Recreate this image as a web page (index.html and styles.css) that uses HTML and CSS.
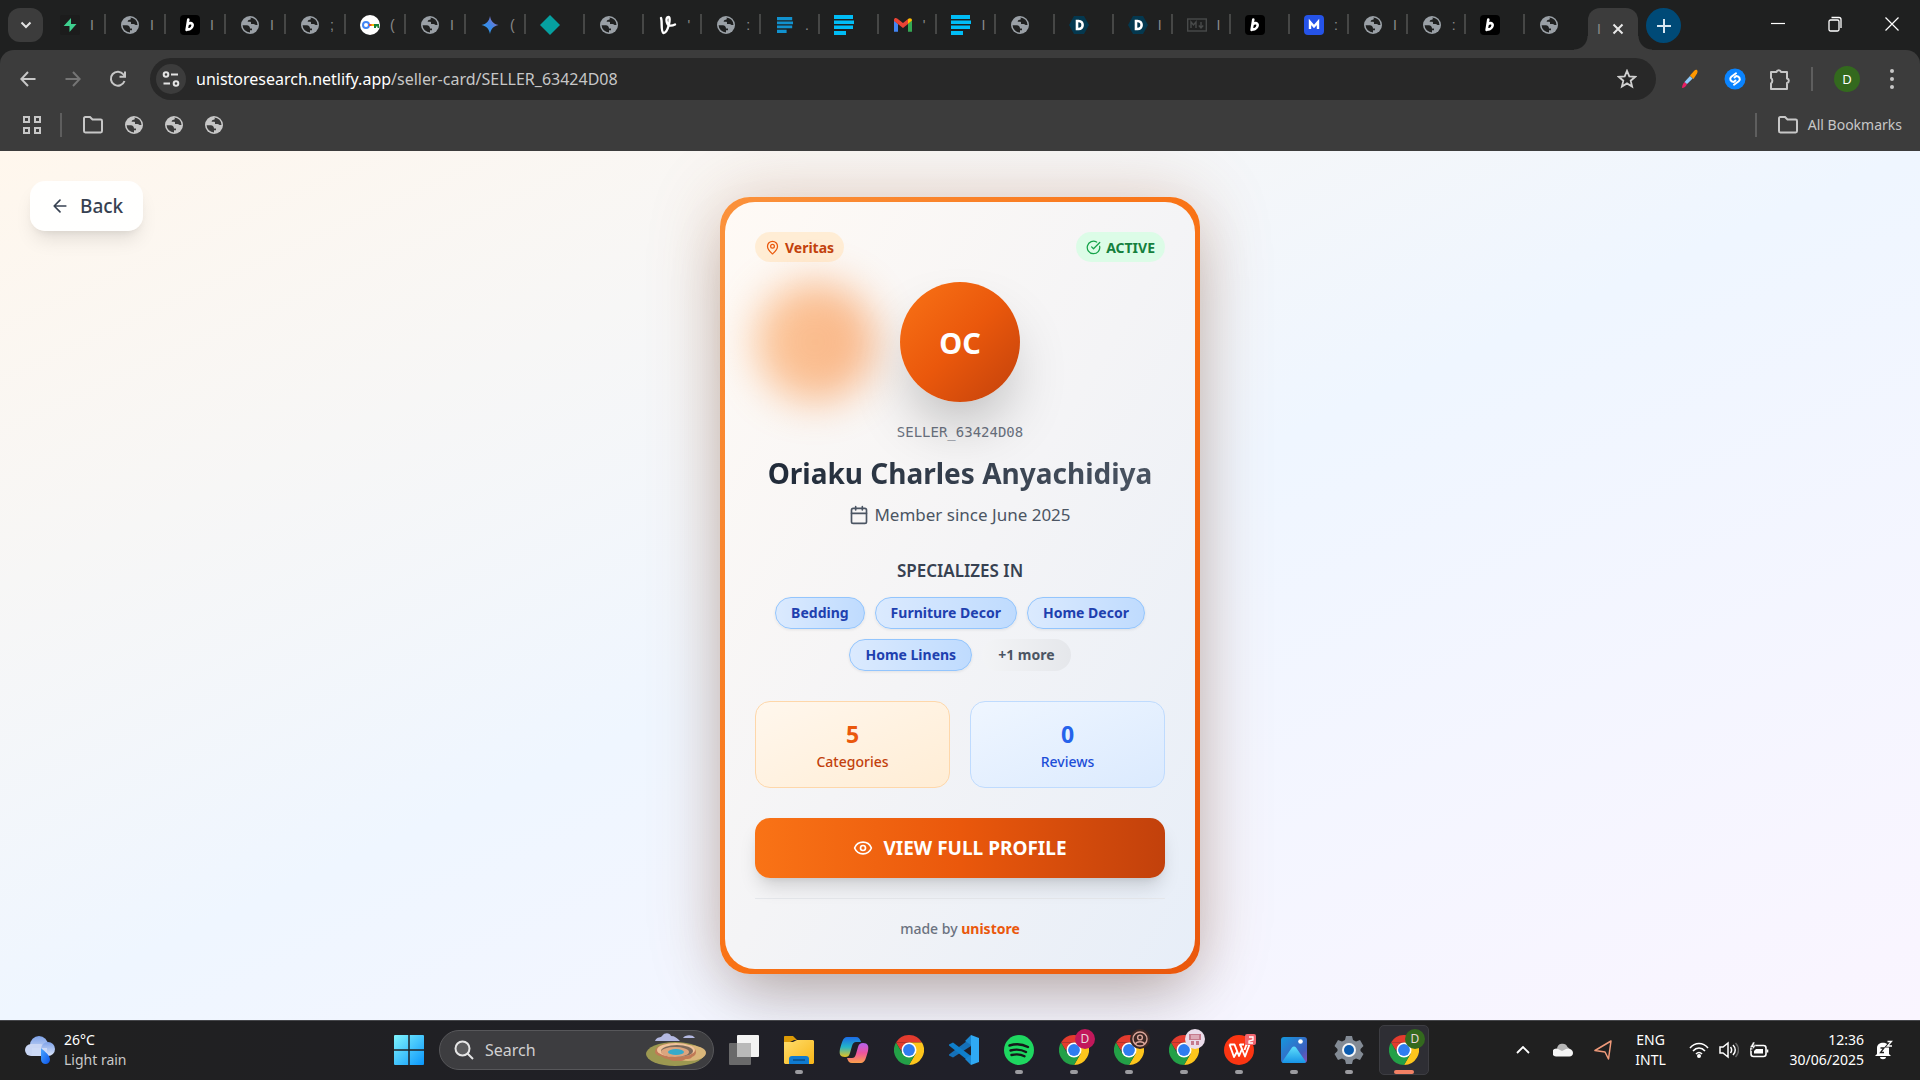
FILE: index.html
```html
<!DOCTYPE html>
<html lang="en">
<head>
<meta charset="utf-8">
<title>Unistore seller card</title>
<link rel="stylesheet" href="styles.css">
</head>
<body>
<svg class="defs" aria-hidden="true">
  <defs>
    <symbol id="globe" viewBox="0 0 20 20"><circle cx="10" cy="10" r="9" fill="currentColor"/><path d="M2.600 10.200h4.200c2 0 3.200 1.300 3.200 3.200h2v1.800h-2v2.300A7.500 7.500 0 0 1 2.600 10.200zM10.300 2.500c.9 1.200.6 2.100-.6 2.300-1.700.3-2 .8-2 1.900H10c.6 0 1 .4 1 1v1.300h2.500c1.200 0 1.700 1.100 2.700 1.100h1.300a7.500 7.500 0 0 0-7.200-7.600z" fill="var(--hole)"/></symbol>
    <symbol id="bee" viewBox="0 0 20 20"><rect width="20" height="20" rx="4"/><path d="M8.300 4.500 6.600 15M7.300 10.200c1.800-3.200 6-2.500 5.300.6-.7 3-3.700 4.400-5.500 2.900" fill="none" stroke="#fff" stroke-width="2.600" stroke-linecap="round"/></symbol>
    <symbol id="lines" viewBox="0 0 20 20"><path d="M0 0h19v4H0zM0 5.500h20v3.500H0zM0 10.500h19v3.500H0zM0 16h12v4H0z" fill="currentColor"/></symbol>
    <symbol id="dhex" viewBox="0 0 20 20"><path d="M5 1h10l5 9-5 9H5L0 10z" fill="#04384f"/><path d="M8 6v8h1.500c5.500 0 5.500-8 0-8z" fill="none" stroke="#fff" stroke-width="2.600"/></symbol>
    <symbol id="folder" viewBox="0 0 22 20"><path d="M2 3.500c0-.8.500-1.500 1.300-1.500H8l2.500 2.500h8.200c.8 0 1.300.6 1.300 1.400v10.200c0 .8-.5 1.400-1.300 1.400H3.300c-.8 0-1.300-.6-1.300-1.400z" fill="none" stroke="currentColor" stroke-width="2"/></symbol>
    <symbol id="chrome" viewBox="0 0 32 32"><path d="M2.140 8A16 16 0 0 1 29.860 8H16z" fill="#e33b2e"/><path d="M2.140 8H16L7 16z" fill="#e33b2e"/><path d="M29.860 8H16l7 12-7 12A16 16 0 0 0 29.860 8z" fill="#fdc51c"/><path d="M2.140 8A16 16 0 0 0 16 32l6.900-12H9.100z" fill="#23a047"/><circle cx="16" cy="16" r="8" fill="#fff"/><circle cx="16" cy="16" r="6.300" fill="#2f7df0"/></symbol>
    <linearGradient id="gWin" x1="0" y1="0" x2="1" y2="1"><stop offset="0" stop-color="#7ff4fd"/><stop offset="1" stop-color="#0a96fb"/></linearGradient>
    <linearGradient id="gStar" x1="0" y1="1" x2="1" y2="0"><stop offset="0" stop-color="#23a5e0"/><stop offset=".5" stop-color="#3f86e8"/><stop offset="1" stop-color="#b06ab0"/></linearGradient>
    <linearGradient id="gCloud" x1="0" y1="0" x2="0" y2="1"><stop offset="0" stop-color="#7ea2e8"/><stop offset="1" stop-color="#dbe5fa"/></linearGradient>
    <linearGradient id="gDrop" x1="0" y1="0" x2="1" y2="1"><stop offset="0" stop-color="#4aa6ff"/><stop offset="1" stop-color="#0b55ea"/></linearGradient>
    <linearGradient id="gCopA" x1="0" y1="0" x2="0" y2="1"><stop offset="0" stop-color="#1c6be8"/><stop offset=".5" stop-color="#23b5c8"/><stop offset="1" stop-color="#e8c21e"/></linearGradient>
    <linearGradient id="gCopB" x1="0" y1="0" x2="0" y2="1"><stop offset="0" stop-color="#b263f0"/><stop offset=".5" stop-color="#f0549c"/><stop offset="1" stop-color="#fba04a"/></linearGradient>
    <linearGradient id="gFold" x1="0" y1="0" x2="1" y2="1"><stop offset="0" stop-color="#ffdd6b"/><stop offset="1" stop-color="#f8b517"/></linearGradient>
    <linearGradient id="gPhoto" x1="0" y1="0" x2="1" y2="1"><stop offset="0" stop-color="#1498dd"/><stop offset=".7" stop-color="#3f5fc0"/><stop offset="1" stop-color="#8a4fb5"/></linearGradient>
    <linearGradient id="gHill" x1="0" y1="0" x2="0" y2="1"><stop offset="0" stop-color="#5fe0fb"/><stop offset="1" stop-color="#1793e6"/></linearGradient>
  </defs>
</svg>

<header class="browser">
  <div class="tabbar">
    <button class="tab-search" aria-label="Search tabs"><svg width="12" height="8" viewBox="0 0 12 8"><path d="M1.500 1.500 6 6l4.500-4.500" fill="none" stroke="#e3e3e3" stroke-width="2"/></svg></button>
    <nav class="tabs">
      <a class="tab" href="#"><svg class="fav" viewBox="0 0 20 20"><rect width="20" height="20" rx="2" fill="#1c1c1c"/><path d="M11 3v6h5.500L9.500 17v-6H3.700z" fill="#3ecf8e"/></svg><span>I</span></a>
      <a class="tab" href="#"><svg class="fav"><use href="#globe"/></svg><span>I</span></a>
      <a class="tab" href="#"><svg class="fav"><use href="#bee"/></svg><span>I</span></a>
      <a class="tab" href="#"><svg class="fav"><use href="#globe"/></svg><span>I</span></a>
      <a class="tab" href="#"><svg class="fav"><use href="#globe"/></svg><span>;</span></a>
      <a class="tab" href="#"><svg class="fav" viewBox="0 0 20 20"><circle cx="10" cy="10" r="10" fill="#fff"/><circle cx="6" cy="10" r="3" fill="none" stroke="#4285f4" stroke-width="2"/><path d="M9 9h3v2H9z" fill="#ea4335"/><path d="M11.500 9H14v2h-2.500z" fill="#fbbc05"/><path d="M14 9h5v4h-1.500v-1.500H16V13h-2z" fill="#188038"/></svg><span>(</span></a>
      <a class="tab" href="#"><svg class="fav"><use href="#globe"/></svg><span>I</span></a>
      <a class="tab" href="#"><svg class="fav" viewBox="0 0 20 20"><path d="M10 1c.8 5 3.500 8 8.500 9-5 1-7.700 4-8.500 9-.8-5-3.500-8-8.500-9 5-1 7.700-4 8.500-9z" fill="url(#gStar)"/></svg><span>(</span></a>
      <a class="tab" href="#"><svg class="fav" viewBox="0 0 20 20"><path d="M10 0 20 10 10 20 0 10z" fill="#06a0a0"/></svg></a>
      <a class="tab" href="#"><svg class="fav"><use href="#globe"/></svg></a>
      <a class="tab" href="#"><svg class="fav" viewBox="0 0 20 20"><path d="M3 3c1.500 3-.5 14 2.500 15 4.500 0 8-16 5-16-3.500 0-2 8 1 8.500 2 .5 3.500 0 5.500-1" fill="none" stroke="#fff" stroke-width="2.400" stroke-linecap="round"/></svg><span>'</span></a>
      <a class="tab" href="#"><svg class="fav"><use href="#globe"/></svg><span>:</span></a>
      <a class="tab" href="#"><svg class="fav fav-small"><use href="#lines"/></svg><span>.</span></a>
      <a class="tab" href="#"><svg class="fav cyan"><use href="#lines"/></svg></a>
      <a class="tab" href="#"><svg class="fav" viewBox="0 0 20 20"><path d="M1 5.500v11.200h4V9z" fill="#4285f4"/><path d="M19 5.500v11.200h-4V9z" fill="#34a853"/><path d="M1 5.500V4.800C1 3 3 2.500 4.200 3.500L10 8l5-4v5l-5 4-9-7z" fill="#ea4335"/><path d="M15 9V4c2-1.500 4-.5 4 1.500z" fill="#fbbc04"/></svg><span>'</span></a>
      <a class="tab" href="#"><svg class="fav cyan"><use href="#lines"/></svg><span>I</span></a>
      <a class="tab" href="#"><svg class="fav"><use href="#globe"/></svg></a>
      <a class="tab" href="#"><svg class="fav"><use href="#dhex"/></svg></a>
      <a class="tab" href="#"><svg class="fav"><use href="#dhex"/></svg><span>I</span></a>
      <a class="tab" href="#"><svg class="fav" viewBox="0 0 20 20" fill="none" stroke="#484a4a" stroke-width="1.400"><rect x=".7" y="4" width="18.600" height="12"/><path d="M4 13V7l2.500 3L9 7v6M14 7v5M11.800 10.500 14 13l2.200-2.500"/></svg><span>I</span></a>
      <a class="tab" href="#"><svg class="fav"><use href="#bee"/></svg></a>
      <a class="tab" href="#"><svg class="fav" viewBox="0 0 20 20"><rect width="20" height="20" rx="4" fill="#2553e8"/><path d="M6 14V7l4 4.500L14 7v7" fill="none" stroke="#fff" stroke-width="2.400"/></svg><span>:</span></a>
      <a class="tab" href="#"><svg class="fav"><use href="#globe"/></svg><span>I</span></a>
      <a class="tab" href="#"><svg class="fav"><use href="#globe"/></svg><span>:</span></a>
      <a class="tab" href="#"><svg class="fav"><use href="#bee"/></svg></a>
      <a class="tab last" href="#"><svg class="fav"><use href="#globe"/></svg></a>
    </nav>
    <div class="tab-active"><span>I</span><button aria-label="Close tab"><svg width="12" height="12" viewBox="0 0 12 12"><path d="m1.500 1.500 9 9m0-9-9 9" stroke="#e8e8e8" stroke-width="2"/></svg></button></div>
    <button class="tab-new" aria-label="New tab"><svg width="14" height="14" viewBox="0 0 14 14"><path d="M7 0v14M0 7h14" stroke="#d8e6f0" stroke-width="2"/></svg></button>
    <div class="win-controls">
      <button aria-label="Minimize"><svg width="14" height="14" viewBox="0 0 14 14"><path d="M0 6.500h14" stroke="#fff" stroke-width="1.200"/></svg></button>
      <button aria-label="Restore"><svg width="14" height="16" viewBox="0 0 14 16" fill="none" stroke="#fff" stroke-width="1.300"><rect x="1" y="4" width="10" height="11" rx="1.500"/><path d="M3.500 1.500H11c1.300 0 2 .7 2 2V12"/></svg></button>
      <button aria-label="Close"><svg width="14" height="14" viewBox="0 0 14 14"><path d="m.5.500 13 13m0-13-13 13" stroke="#fff" stroke-width="1.200"/></svg></button>
    </div>
  </div>

  <div class="toolbar">
    <div class="nav-buttons">
      <button aria-label="Back"><svg width="16" height="16" viewBox="0 0 16 16" fill="none" stroke="#c7c7c7" stroke-width="2"><path d="M15.500 8H1.500M8 1 1.300 8 8 15"/></svg></button>
      <button aria-label="Forward" disabled><svg width="16" height="16" viewBox="0 0 16 16" fill="none" stroke="#757575" stroke-width="2"><path d="M.5 8h14M8 1l6.700 7L8 15"/></svg></button>
      <button aria-label="Reload"><svg width="18" height="18" viewBox="0 0 18 18" fill="none" stroke="#c7c7c7" stroke-width="2"><path d="M15.500 11A7 7 0 1 1 14.500 4.500L16 6.500M16 1.500v5.200h-5.500"/></svg></button>
    </div>
    <form class="address">
      <button type="button" class="site-info" aria-label="Site information"><svg width="18" height="16" viewBox="0 0 18 16" fill="none" stroke="#e3e3e3" stroke-width="2"><circle cx="4" cy="3.500" r="2.300"/><path d="M9 3.500h7M1.500 12.500H8"/><circle cx="14" cy="12.500" r="2.300"/></svg></button>
      <div class="url" role="textbox" aria-label="Address">unistoresearch.netlify.app<span>/seller-card/SELLER_63424D08</span></div>
      <button type="button" class="bookmark" aria-label="Bookmark this tab"><svg width="20" height="20" viewBox="0 0 20 20"><path d="m10 1.800 2.300 5.500 6 .5-4.600 3.900 1.400 5.800-5.100-3.100-5.100 3.100 1.400-5.800L1.700 7.800l6-.5z" fill="none" stroke="#d0d0d0" stroke-width="1.800"/></svg></button>
    </form>
    <div class="extensions">
      <button aria-label="Color picker"><svg width="20" height="20" viewBox="0 0 20 20"><path d="M2 19c0-2.500 1-4.500 2.500-6l2.500 2C6 17.500 4 19 2 19z" fill="#e91e63"/><path d="m4.500 13 5.500-6 2.700 2.500L7 15z" fill="#90caf9"/><path d="m10 6.500 4-4.500c2.500-2.500 4.500-.5 3 2.500l-3.500 5.500z" fill="#ff9800"/></svg></button>
      <button aria-label="Shazam"><svg width="22" height="22" viewBox="0 0 22 22"><circle cx="11" cy="11" r="10.500" fill="#0a84ff"/><path d="M11.500 12.500 9.800 14C6.500 13.500 5 11 7.300 8.800L12 5.300M10.500 9.500 12.200 8c3.300.5 4.800 3 2.500 5.200L10 16.700" fill="none" stroke="#fff" stroke-width="2" stroke-linecap="round"/></svg></button>
      <button aria-label="Extensions"><svg width="22" height="24" viewBox="0 0 22 24"><path d="M2 5h5.500a2.300 2.300 0 0 1 4.500 0h6v6.500a2.300 2.300 0 0 1 0 4.500v6H2v-5.500a3.500 3.500 0 0 0 0-5.500z" fill="none" stroke="#c7c7c7" stroke-width="2" stroke-linejoin="round"/></svg></button>
      <i class="rule"></i>
      <button class="profile" aria-label="Profile">D</button>
      <button aria-label="Menu"><svg width="6" height="22" viewBox="0 0 6 22" fill="#c7c7c7"><circle cx="3" cy="3" r="2"/><circle cx="3" cy="11" r="2"/><circle cx="3" cy="19" r="2"/></svg></button>
    </div>
  </div>

  <div class="bookmarks">
    <a href="#" aria-label="Apps"><svg width="20" height="20" viewBox="0 0 20 20" fill="none" stroke="#c7c7c7" stroke-width="2"><path d="M2 2h5v5H2zM13 2h5v5h-5zM2 13h5v5H2zM13 13h5v5h-5z"/></svg></a>
    <i class="rule"></i>
    <a href="#" aria-label="Folder"><svg width="22" height="20"><use href="#folder"/></svg></a>
    <a href="#" aria-label="Site"><svg width="20" height="20"><use href="#globe"/></svg></a>
    <a href="#" aria-label="Site"><svg width="20" height="20"><use href="#globe"/></svg></a>
    <a href="#" aria-label="Site"><svg width="20" height="20"><use href="#globe"/></svg></a>
    <i class="rule push"></i>
    <a href="#" class="all"><svg width="22" height="20"><use href="#folder"/></svg>All Bookmarks</a>
  </div>
</header>

<main class="page">
  <button class="back"><svg width="20" height="20" viewBox="0 0 24 24" fill="none" stroke="currentColor" stroke-width="2" stroke-linecap="round" stroke-linejoin="round"><path d="m12 19-7-7 7-7M19 12H5"/></svg>Back</button>

  <article class="card">
    <div class="card-body">
      <div class="badges">
        <span class="badge campus"><svg width="15" height="15" viewBox="0 0 24 24"><path d="M20 10c0 5-5.500 10.200-7.400 11.800a1 1 0 0 1-1.200 0C9.500 20.200 4 15 4 10a8 8 0 0 1 16 0"/><circle cx="12" cy="10" r="3"/></svg>Veritas</span>
        <span class="badge active"><svg width="15" height="15" viewBox="0 0 24 24"><path d="M21.800 10A10 10 0 1 1 17 3.330"/><path d="m9 11 3 3L22 4"/></svg>ACTIVE</span>
      </div>
      <div class="avatar-wrap"><i class="glow"></i><div class="avatar">OC</div></div>
      <p class="seller-id">SELLER_63424D08</p>
      <h1>Oriaku Charles Anyachidiya</h1>
      <p class="member"><svg width="20" height="20" viewBox="0 0 24 24"><path d="M8 2v4M16 2v4M3 10h18"/><rect x="3" y="4" width="18" height="18" rx="2"/></svg>Member since June 2025</p>
      <h2>SPECIALIZES IN</h2>
      <ul class="chips">
        <li>Bedding</li><li>Furniture Decor</li><li>Home Decor</li><li>Home Linens</li><li class="more">+1 more</li>
      </ul>
      <div class="stats">
        <div class="stat orange"><strong>5</strong>Categories</div>
        <div class="stat blue"><strong>0</strong>Reviews</div>
      </div>
      <button class="view"><svg width="20" height="20" viewBox="0 0 24 24"><path d="M2.060 12.350a1 1 0 0 1 0-.7 10.750 10.750 0 0 1 19.880 0 1 1 0 0 1 0 .7 10.750 10.750 0 0 1-19.880 0"/><circle cx="12" cy="12" r="3"/></svg>VIEW FULL PROFILE</button>
      <footer>made by <a href="#">unistore</a></footer>
    </div>
  </article>
</main>

<footer class="taskbar">
  <button class="weather">
    <svg width="30" height="28" viewBox="0 0 30 28"><circle cx="14" cy="9" r="9" fill="url(#gCloud)"/><rect y="8" width="21" height="12" rx="6" fill="#c9d6f4"/><circle cx="23" cy="13" r="7" fill="url(#gCloud)"/><path d="M7 12h15v8H7z" fill="#cddaf6"/><path d="M16 12c4 4 9 7 9 11.500a4.500 4.500 0 0 1-9 0z" fill="url(#gDrop)"/></svg>
    <span><b>26°C</b>Light rain</span>
  </button>
  <nav class="apps">
    <button class="app" aria-label="Start"><svg width="30" height="30" viewBox="0 0 30 30" fill="url(#gWin)"><path d="M1 0h28a1 1 0 0 1 1 1v28a1 1 0 0 1-1 1H1a1 1 0 0 1-1-1V1a1 1 0 0 1 1-1z"/><path d="M15 0v30M0 15h30" stroke="#202024" stroke-width="1.500"/></svg></button>
    <label class="search">
      <svg width="20" height="20" viewBox="0 0 20 20" fill="#5c5c5e" stroke="#e6e6e6" stroke-width="2"><circle cx="8.500" cy="8.500" r="7"/><path d="m13.500 13.500 5.500 5.500"/></svg>
      <input type="text" placeholder="Search">
      <svg width="62" height="34" viewBox="0 0 62 34"><path d="M10 8c2-5 6-3 7-5 3-4 8-3 9 0 4 0 6 2 9 5zM38 5c2-3 9-4 12 0z" fill="#b4b9e2"/><ellipse cx="30" cy="21" rx="29" ry="12" fill="#9c9851"/><ellipse cx="43" cy="20" rx="18" ry="8" fill="#d9b67a"/><path d="M10 19c0-6 9-9 20-9s21 3 21 9c0 3-2 4-4 5-2 3-6 1-8 3-3 2-6 0-9 1-3 0-5-1-7-2-3 0-5-2-7-3-3 0-6-2-6-4z" fill="#c07a56"/><ellipse cx="31" cy="17" rx="19" ry="7" fill="#f0c49b"/><ellipse cx="32" cy="18" rx="16" ry="6" fill="#7d6a5c"/><ellipse cx="30" cy="19" rx="14" ry="5" fill="#dca57e"/><ellipse cx="31" cy="19" rx="8" ry="3" fill="#35aacb"/></svg>
    </label>
    <button class="app" aria-label="Task view"><svg width="30" height="30" viewBox="0 0 30 30"><rect x="8" width="22" height="22" rx="1" fill="#f3f3f3"/><rect y="8" width="22" height="22" rx="1" fill="#777" opacity=".85"/><path d="M8 8h14v14H8z" fill="#b9b9b9"/></svg></button>
    <button class="app open" aria-label="File Explorer"><svg width="30" height="30" viewBox="0 0 30 30"><path d="M0 2c0-1 .5-1 1-1h8l4 4h-3L0 10z" fill="#dc9a06"/><path d="M0 7h9l4-2h16l1 1v22l-1 1H1l-1-1z" fill="url(#gFold)"/><path d="M5 29v-5c0-2 1-3 3-3h14c2 0 3 1 3 3v5z" fill="#0f7bd1"/><path d="M9 25h12" stroke="#0a4c86" stroke-width="1.500"/></svg></button>
    <button class="app" aria-label="Copilot"><svg width="30" height="30" viewBox="0 0 30 30"><path d="M8 2h9c3 0 4 2 5 5h-5c-2 0-3 1-4 4l-2 7c-1 3-2 4-5 4-5 0-6-3-5-8C3 7 4 2 8 2z" fill="url(#gCopA)"/><path d="M22 28h-9c-3 0-4-2-5-5h5c2 0 3-1 4-4l2-7c1-3 2-4 5-4 5 0 6 3 5 8-2 7-3 12-7 12z" fill="url(#gCopB)"/></svg></button>
    <button class="app" aria-label="Chrome"><svg width="30" height="30"><use href="#chrome"/></svg></button>
    <button class="app" aria-label="Visual Studio Code"><svg width="30" height="30" viewBox="0 0 30 30"><path d="M22 3v8L4 22.500 0 20.500v-1z" fill="#1570b8"/><path d="M0 9.500 4 7.500 22 21v7L0 10.500z" fill="#0f7fcb"/><path d="m22 0 8 3v24l-8 3z" fill="#2fa9f3"/><path d="m22 0-6 6 6 4zM22 30l-6-6 6-4z" fill="#1b86d0"/></svg></button>
    <button class="app open" aria-label="Spotify"><svg width="30" height="30" viewBox="0 0 30 30"><circle cx="15" cy="15" r="15" fill="#1ed760"/><path d="M5.500 10.500c6-2 13-1.500 18.500 1.500M6.500 15.500c5.500-1.500 11-1 15.500 1.500M7.500 20c4.500-1 9-1 13 1.200" fill="none" stroke="#15181a" stroke-width="2.400" stroke-linecap="round"/></svg></button>
    <button class="app open" aria-label="Chrome, profile D"><svg width="30" height="30"><use href="#chrome"/></svg><span class="who pink">D</span></button>
    <button class="app open" aria-label="Chrome, personal"><svg width="30" height="30"><use href="#chrome"/></svg><span class="who brown"><svg width="16" height="16" viewBox="0 0 16 16" fill="none" stroke="#dba59a" stroke-width="1.400"><circle cx="8" cy="8" r="7"/><circle cx="8" cy="6.500" r="2.400"/><path d="M3.500 13c1-3 8-3 9 0"/></svg></span></button>
    <button class="app open" aria-label="Chrome, store"><svg width="30" height="30"><use href="#chrome"/></svg><span class="who white"><svg width="14" height="14" viewBox="0 0 14 14" fill="#c57b8d"><path d="M1 2h12v6H1zM3 9h3v4H3zM8 9h3v4H8z"/><path d="M3 4h8M3 6h8" stroke="#f3d9e0"/></svg></span></button>
    <button class="app open" aria-label="WPS Office"><svg width="30" height="30" viewBox="0 0 30 30"><circle cx="15" cy="15" r="15" fill="#fb3512"/><path d="M5.500 9.500h5L15 21l3-7-2-4.500h4M5.500 9.500 10 22l3.500-6M18 14l3 7.500 4.500-12h-3L20.500 15" fill="none" stroke="#fff" stroke-width="1.900" stroke-linejoin="round"/></svg><span class="who link"><svg width="10" height="10" viewBox="0 0 10 10"><path d="M3 2h4v3L3 6v2h4" fill="none" stroke="#fff" stroke-width="1.300"/></svg></span></button>
    <button class="app open" aria-label="Photos"><svg width="26" height="26" viewBox="0 0 26 26"><rect width="26" height="26" rx="3" fill="url(#gPhoto)"/><path d="M1 25 11 10.500c1-1.500 3-1.500 4 0L25 25c-1 1-2 1-3 1H3c-1 0-1.500 0-2-1z" fill="url(#gHill)"/><circle cx="19.500" cy="4.500" r="2.300" fill="#fff"/></svg></button>
    <button class="app open" aria-label="Settings"><svg width="30" height="30" viewBox="0 0 30 30"><path d="M12 1h6l1 4 3 1.500L26 5l3.500 6-3 3v2l3 3L26 25l-4-1.500L19 25l-1 4h-6l-1-4-3-1.500L4 25 .5 19l3-3v-2l-3-3L4 5l4 1.500L11 5z" fill="#838b95"/><circle cx="15" cy="15" r="7" fill="#f3f5f7"/><circle cx="15" cy="15" r="5" fill="#0b5cb0"/></svg></button>
    <button class="app open current" aria-label="Chrome, current window"><svg width="30" height="30"><use href="#chrome"/></svg><span class="who green">D</span></button>
  </nav>
  <div class="tray">
    <button aria-label="Hidden icons"><svg width="14" height="8" viewBox="0 0 14 8"><path d="m1 7 6-6 6 6" fill="none" stroke="#fff" stroke-width="1.800"/></svg></button>
    <button aria-label="OneDrive"><svg width="20" height="14" viewBox="0 0 20 14"><path d="M4 6a5.500 5.500 0 0 1 10.500-2L18 7 10 11z" fill="#b5b5b5"/><path d="M4 13.500A4 4 0 1 1 5 6l4 2 4-2c5-1 7 2 7 4s-1.500 3.500-3.500 3.500z" fill="#f5f5f5"/></svg></button>
    <button aria-label="Location in use"><svg width="18" height="20" viewBox="0 0 18 20"><path d="M17 1 1 10.500l10 1.500 3.500 7z" fill="none" stroke="#f09a7a" stroke-width="1.500" stroke-linejoin="round"/></svg></button>
    <button class="lang"><span>ENG</span><span>INTL</span></button>
    <button class="status" aria-label="Network, sound and battery">
      <svg width="20" height="16" viewBox="0 0 20 16" fill="none" stroke="#fff" stroke-width="1.600"><path d="M1 6C6 0 14 0 19 6M4 9c3.500-4 8.500-4 12 0M7 12c2-2 4-2 6 0"/><circle cx="10" cy="14" r="1.200" fill="#fff"/></svg>
      <svg width="20" height="18" viewBox="0 0 20 18" fill="none" stroke="#fff" stroke-width="1.500"><path d="M1 6h3l5-4v14l-5-4H1zM11.500 6c1.500 2 1.500 4 0 6M14 4c3 3 3 7 0 10"/><path d="M16.500 2c4 4 4 10 0 14" stroke="#666"/></svg>
      <svg width="20" height="16" viewBox="0 0 20 16" fill="none" stroke="#fff" stroke-width="1.600"><rect x="2" y="3.500" width="15" height="11" rx="2.500"/><path d="M18.500 7.500v3"/><path d="M7 7h7v4.500H5V9z" fill="#fff" stroke="none"/><path d="M4 0 1 5.500h3L2 9l5-5H4.500L6 0z" fill="#fff" stroke="#202020" stroke-width=".5"/></svg>
    </button>
    <button class="clock"><span>12:36</span><span>30/06/2025</span></button>
    <button aria-label="Notifications"><svg width="18" height="20" viewBox="0 0 18 20"><path d="M2 14V8c0-7 12-7 12 0v6l2 2H0zM5 17h6c0 3-6 3-6 0z" fill="#fff"/><path d="M5.500 8h3.500L5.500 12.500H9" fill="none" stroke="#202020" stroke-width="1.300"/><path d="M12.500 1.500h4L12.500 6H17" fill="none" stroke="#202020" stroke-width="3"/><path d="M12.500 1.500h4L12.500 6H17" fill="none" stroke="#fff" stroke-width="1.300"/></svg></button>
  </div>
</footer>
</body>
</html>
```

FILE: styles.css
```css
* { box-sizing: border-box; }
html, body { margin: 0; height: 100%; }
body {
  display: flex;
  flex-direction: column;
  min-height: 100vh;
  font-family: "Noto Sans", "Open Sans", sans-serif;
  font-size: 16px;
  color: #4b5563;
}
button, input { font: inherit; color: inherit; }
button { display: inline-flex; align-items: center; justify-content: center; padding: 0; border: 0; background: none; }
a { color: inherit; text-decoration: none; }
p, h1, h2, ul { margin: 0; padding: 0; }
svg { display: block; flex: none; }
.defs { position: absolute; width: 0; height: 0; }

/* Browser chrome */
.browser { flex: none; background: #1f2020; --hole: #1f2020; }
.tabbar { display: flex; align-items: flex-start; height: 50px; padding-left: 8px; }
.tab-search { width: 35px; height: 34px; margin-top: 8px; border-radius: 12px; background: #3c3c3c; }
.tabs { flex: 1; display: grid; grid-template-columns: repeat(8, 60px) repeat(18, 1fr); height: 50px; padding-left: 3px; }
.tab { display: flex; align-items: center; gap: 10px; min-width: 0; padding-left: 14px; color: #9aa0a6; position: relative; }
.tab::after { content: ""; position: absolute; right: 0; top: 14px; width: 2px; height: 20px; background: #464746; }
.tab.last::after { display: none; }
.tab span, .tab-active span { font-family: "Liberation Sans", Arial, sans-serif; font-size: 14px; color: #8a8b8b; }
.fav { width: 20px; height: 20px; color: #9aa0a6; }
.fav-small { width: 16px; height: 16px; margin: 0 2px; color: #1192cf; }
.cyan { color: #00bdf6; }
.tab-active { position: relative; display: flex; align-items: center; justify-content: space-between; width: 50px; height: 42px; margin: 8px 8px 0 4px; padding: 0 14px 0 9px; border-radius: 12px 12px 0 0; background: #3c3c3c; }
.tab-active::before, .tab-active::after { content: ""; position: absolute; bottom: 0; width: 14px; height: 14px; }
.tab-active::before { right: 100%; background: radial-gradient(circle at 0 0, transparent 13px, #3c3c3c 14px); }
.tab-active::after { left: 100%; background: radial-gradient(circle at 100% 0, transparent 13px, #3c3c3c 14px); }
.tab-new { width: 35px; height: 35px; margin-top: 8px; border-radius: 50%; background: #004a77; }
.win-controls { display: flex; margin-left: 68px; }
.win-controls button { width: 57px; height: 48px; }

.toolbar { display: flex; align-items: center; height: 58px; padding-right: 20px; border-radius: 14px 14px 0 0; background: #3c3c3c; }
.nav-buttons { display: flex; width: 150px; padding-left: 5px; }
.nav-buttons button { width: 45px; height: 36px; }
.address { flex: 1; display: flex; align-items: center; height: 42px; margin-right: 11px; padding: 0 19px 0 6px; border-radius: 21px; background: #282828; }
.site-info { width: 30px; height: 30px; border-radius: 50%; background: #3c3c3c; }
.url { flex: 1; padding-left: 10px; font-size: 16px; line-height: 24px; color: #fff; }
.url span { color: #c7c7c7; }
.extensions { display: flex; align-items: center; }
.extensions button { width: 45px; height: 36px; }
.rule { width: 2px; height: 24px; background: #5e5e5e; }
.extensions .rule { margin: 0 21px 0 9px; }
.extensions .profile { width: 26px; height: 26px; border-radius: 50%; background: #33691e; color: #fff; font-size: 13px; }
.extensions button:last-child { width: 16px; margin-left: 24px; }

.bookmarks { display: flex; align-items: center; gap: 20px; height: 43px; padding: 0 18px 10px 22px; background: #3c3c3c; color: #c7c7c7; font-size: 14px; --hole: #3c3c3c; }
.bookmarks .push { margin-left: auto; }
.bookmarks .all { display: flex; align-items: center; gap: 9px; }
.bookmarks > a:first-child { margin-right: -2px; }

/* Seller page */
.page { flex: 1; display: flex; justify-content: center; align-items: flex-start; position: relative; padding: 46px 30px; background: linear-gradient(to bottom right, #fff7ed, #eff6ff 50%, #faf5ff); overflow: hidden; }
.back { position: absolute; left: 30px; top: 30px; gap: 10px; height: 50px; padding: 0 20px; border-radius: 15px; background: rgba(255, 255, 255, .9); color: #374151; font-size: 19px; font-weight: 500; box-shadow: 0 12px 19px -4px rgba(0, 0, 0, .1), 0 5px 8px -5px rgba(0, 0, 0, .1); }
.card { width: 480px; padding: 5px; border-radius: 30px; background: linear-gradient(to bottom right, #fb923c, #f97316 50%, #ea580c); box-shadow: 0 0 70px rgba(170, 80, 30, .26), 0 31px 62px -15px rgba(0, 0, 0, .25); }
.card-body { padding: 30px; border-radius: 30px; background: linear-gradient(to bottom right, #fffaf5, #f4f4f6 50%, #e7eef8); text-align: center; }
.badges { display: flex; justify-content: space-between; }
.badge { display: flex; align-items: center; gap: 5px; height: 30px; padding: 0 10px; border-radius: 15px; font-size: 14px; font-weight: 700; }
.badge svg, .member svg, .view svg { fill: none; stroke: currentColor; stroke-width: 2; stroke-linecap: round; stroke-linejoin: round; }
.campus { background: #ffedd5; color: #c2410c; }
.campus svg { color: #ea580c; }
.active { background: #dcfce7; color: #15803d; }
.active svg { color: #16a34a; }
.avatar-wrap { display: flex; justify-content: center; position: relative; margin-top: 20px; }
.avatar { position: relative; display: grid; place-items: center; width: 120px; height: 120px; border-radius: 50%; background: linear-gradient(135deg, #f97316, #ea580c 50%, #c2410c); color: #fff; font-size: 29px; font-weight: 700; box-shadow: 0 31px 62px -15px rgba(0, 0, 0, .3); }
.glow { position: absolute; left: 0; top: 0; width: 120px; height: 120px; border-radius: 50%; background: linear-gradient(90deg, #fb923c, #f97316); opacity: .5; filter: blur(20px); }
.seller-id { margin-top: 20px; color: #6b7280; font-family: "DejaVu Sans Mono", monospace; font-size: 14px; line-height: 20px; }
h1 { margin-top: 9px; background: linear-gradient(90deg, #1f2937, #4b5563); background-clip: text; -webkit-background-clip: text; color: transparent; font-size: 28px; line-height: 44px; font-weight: 700; white-space: nowrap; }
.member { display: flex; align-items: center; justify-content: center; gap: 5px; margin-top: 7px; font-size: 17px; line-height: 26px; }
h2 { margin-top: 30px; color: #374151; font-size: 17px; line-height: 26px; font-weight: 600; }
.chips { display: flex; flex-wrap: wrap; justify-content: center; gap: 10px; margin-top: 13px; list-style: none; font-size: 14px; font-weight: 700; line-height: 30px; }
.chips li { padding: 0 15px; border: 1px solid #93c5fd; border-radius: 16px; background: linear-gradient(90deg, #dbeafe, #bfdbfe); color: #1e40af; box-shadow: 0 1px 3px rgba(0, 0, 0, .08); }
.chips .more { border-color: transparent; background: linear-gradient(90deg, #f3f4f6, #e5e7eb) border-box; color: #4b5563; box-shadow: none; }
.stats { display: grid; grid-template-columns: 1fr 1fr; gap: 20px; margin-top: 30px; }
.stat { display: flex; flex-direction: column; padding: 15px; border: 1px solid; border-radius: 15px; font-size: 14px; line-height: 20px; font-weight: 500; }
.stat strong { font-size: 23px; line-height: 35px; font-weight: 700; }
.stat.orange { border-color: #fed7aa; background: linear-gradient(to bottom right, #fff7ed, #ffedd5); color: #c2410c; }
.stat.orange strong { color: #ea580c; }
.stat.blue { border-color: #bfdbfe; background: linear-gradient(to bottom right, #eff6ff, #dbeafe); color: #1d4ed8; }
.stat.blue strong { color: #2563eb; }
.view { gap: 10px; width: 100%; height: 60px; margin-top: 30px; border-radius: 15px; background: linear-gradient(90deg, #f97316, #ea580c 50%, #c2410c); color: #fff; font-size: 19px; font-weight: 700; box-shadow: 0 12px 19px -4px rgba(0, 0, 0, .15), 0 5px 8px -5px rgba(0, 0, 0, .1); }
.card-body footer { margin-top: 20px; padding-top: 20px; border-top: 1px solid #e5e7eb; color: #6b7280; font-size: 14px; line-height: 20px; font-weight: 500; }
.card-body footer a { color: #ea580c; font-weight: 700; }

/* Taskbar */
.taskbar { flex: none; display: flex; align-items: center; height: 60px; box-shadow: inset 0 1px #45464a; background: linear-gradient(90deg, #202020, #20202a 55%, #202020 75%); color: #fff; font-size: 14px; line-height: 20px; }
.weather { flex: 0 0 20%; justify-content: flex-start; gap: 9px; padding-left: 25px; text-align: left; color: #c9c9c9; }
.weather b { display: block; color: #fff; font-weight: 400; }
.apps { display: flex; align-items: center; gap: 5px; }
.app { position: relative; width: 50px; height: 50px; border: 1px solid transparent; border-radius: 5px; }
.app.open::after { content: ""; position: absolute; left: 50%; bottom: 0; width: 8px; height: 4px; margin-left: -4px; border-radius: 2px; background: #9b9ba0; }
.app.current { border-color: #3d3d42; background: #2e2e34; }
.app.current::after { width: 20px; margin-left: -10px; background: #f28165; }
.who { position: absolute; left: 25px; top: 3px; display: grid; place-items: center; width: 20px; height: 20px; border-radius: 50%; font-size: 12px; color: #e8d8dd; }
.pink { background: #c2185b; }
.brown { background: #3b2724; }
.white { background: #eadcea; }
.green { background: #33691e; }
.link { left: 30px; top: 8px; width: 11px; height: 11px; border-radius: 2px; background: #f0656f; }
.search { display: flex; align-items: center; width: 275px; height: 40px; padding: 0 6px 0 14px; border: 1px solid #57575a; border-radius: 20px; background: #3d3d40; }
.search input { flex: 1; min-width: 0; padding: 0 0 0 11px; border: 0; outline: 0; background: none; font-size: 16px; }
.search input::placeholder { color: #d0d0d0; opacity: 1; }
.tray { display: flex; align-items: center; margin-left: auto; padding-right: 27px; }
.tray button { min-width: 40px; height: 50px; }
.tray .lang { flex-direction: column; width: 56px; }
.tray .status { gap: 10px; padding: 0 10px; }
.tray .clock { flex-direction: column; align-items: flex-end; padding: 0 0 0 11px; }
.tray button:last-child { min-width: 18px; margin-left: 11px; }
```
